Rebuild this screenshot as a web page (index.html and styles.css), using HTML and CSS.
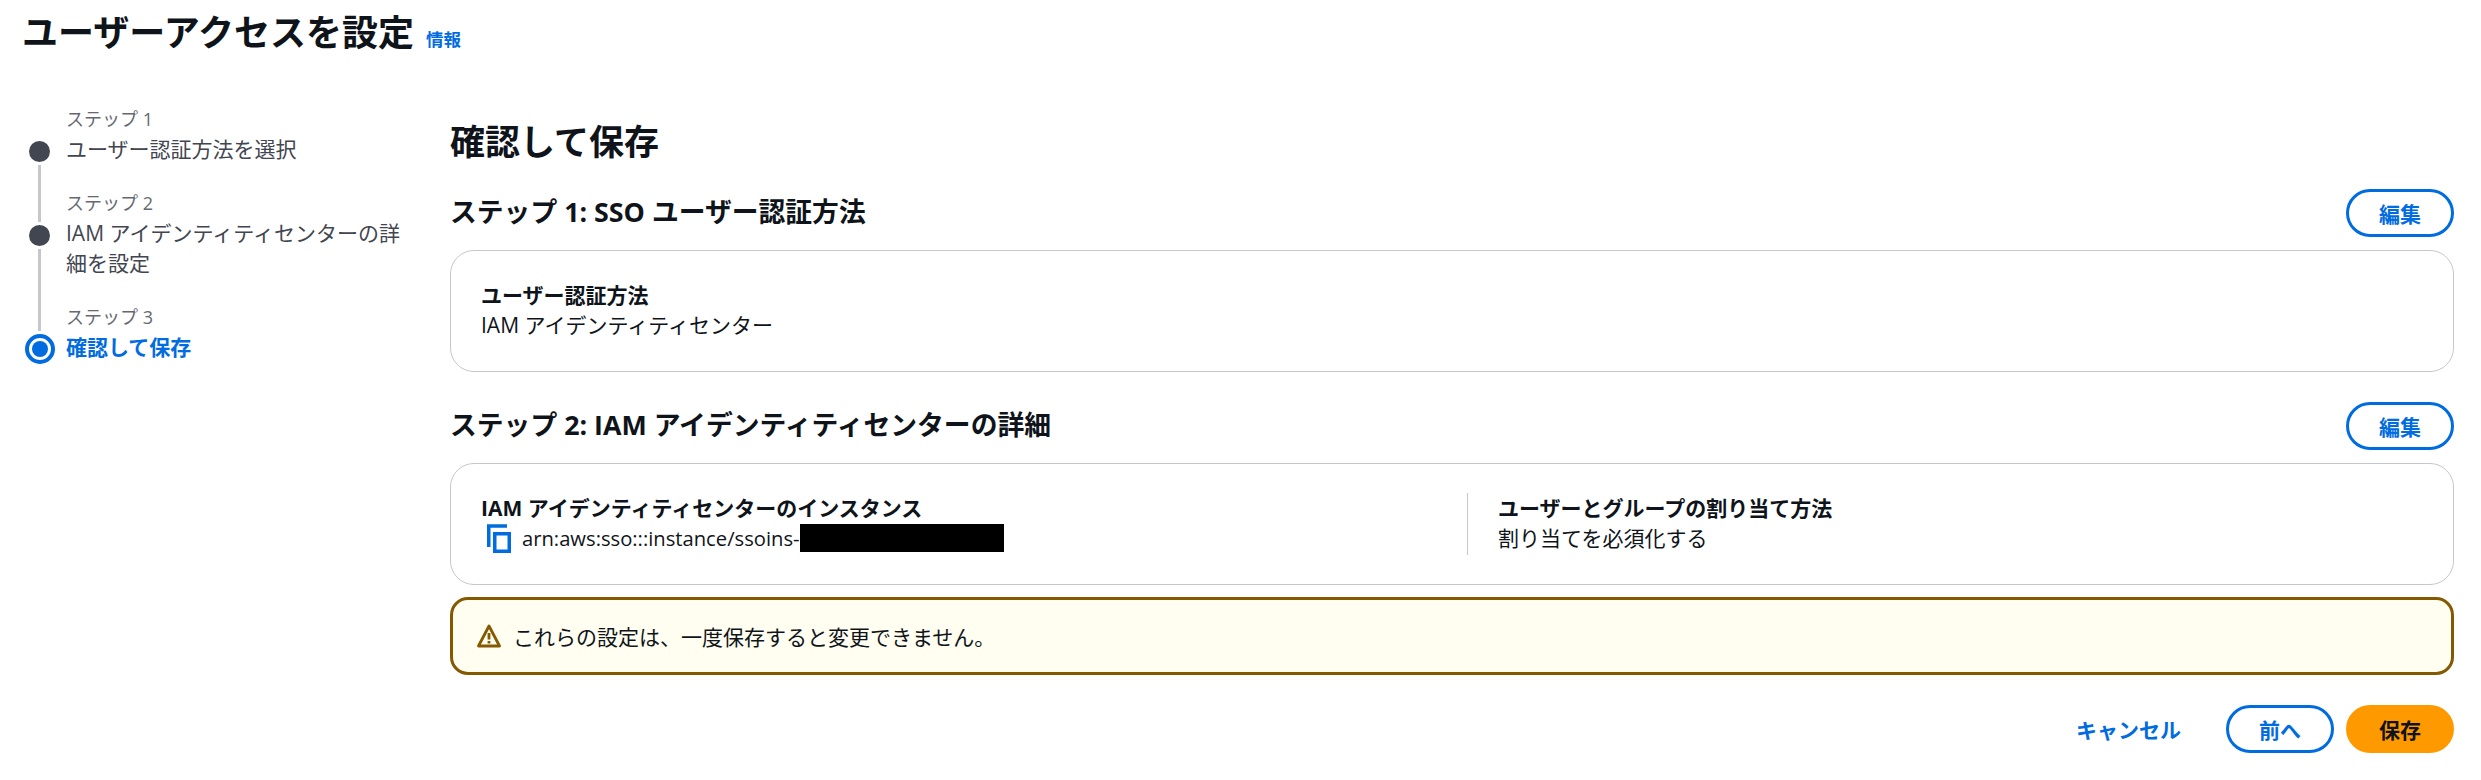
FILE: index.html
```html
<!DOCTYPE html>
<html lang="ja">
<head>
    <meta charset="UTF-8">
    <title>ユーザーアクセスを設定</title>
    <link rel="stylesheet" href="styles.css">
</head>
<body>
    <header class="page-header">
        <h1>ユーザーアクセスを設定</h1>
        <a class="info-link">情報</a>
    </header>
    <div class="layout">
        <nav class="steps">
            <div class="step">
                <div class="marker">
                    <span class="spacer-first"></span>
                    <span class="dot"></span>
                    <span class="line line-bottom"></span>
                </div>
                <div class="step-text">
                    <div class="step-label">ステップ 1</div>
                    <div class="step-title">ユーザー認証方法を選択</div>
                </div>
            </div>
            <div class="step">
                <div class="marker">
                    <span class="line line-top"></span>
                    <span class="dot"></span>
                    <span class="line line-bottom"></span>
                </div>
                <div class="step-text">
                    <div class="step-label">ステップ 2</div>
                    <div class="step-title">IAM アイデンティティセンターの詳細を設定</div>
                </div>
            </div>
            <div class="step step-active">
                <div class="marker">
                    <span class="line line-top-last"></span>
                    <span class="dot-active"></span>
                </div>
                <div class="step-text">
                    <div class="step-label">ステップ 3</div>
                    <div class="step-title">確認して保存</div>
                </div>
            </div>
        </nav>
        <main class="content">
            <h2>確認して保存</h2>
            <div class="section-head">
                <h3>ステップ 1: SSO ユーザー認証方法</h3>
                <button class="btn">編集</button>
            </div>
            <section class="card">
                <div class="field">
                    <div class="field-label">ユーザー認証方法</div>
                    <div class="field-value">IAM アイデンティティセンター</div>
                </div>
            </section>
            <div class="section-head section-head-2">
                <h3>ステップ 2: IAM アイデンティティセンターの詳細</h3>
                <button class="btn">編集</button>
            </div>
            <section class="card card-columns">
                <div class="field">
                    <div class="field-label">IAM アイデンティティセンターのインスタンス</div>
                    <div class="field-value arn">
                        <svg class="copy-icon" width="24" height="29" viewBox="0 0 24 29" fill="none" stroke="#006ce0" stroke-width="3.500">
                            <path d="M1.750 23V2H20"/>
                            <rect x="7.750" y="9.750" width="14.500" height="17.500"/>
                        </svg>
                        <span class="arn-text">arn:aws:sso:::instance/ssoins-</span><span class="redacted"></span>
                    </div>
                </div>
                <div class="field field-right">
                    <div class="field-label">ユーザーとグループの割り当て方法</div>
                    <div class="field-value">割り当てを必須化する</div>
                </div>
            </section>
            <div class="alert">
                <svg width="24" height="24" viewBox="0 0 24 24" fill="none" stroke="#855900" stroke-width="2.800" stroke-linejoin="round">
                    <path d="M12 2 L22.500 22 H1.500 Z"/>
                    <path d="M12 9 V15.500 M12 17 V19.500"/>
                </svg>
                <span>これらの設定は、一度保存すると変更できません。</span>
            </div>
            <div class="actions">
                <a class="btn-link">キャンセル</a>
                <button class="btn">前へ</button>
                <button class="btn btn-primary">保存</button>
            </div>
        </main>
    </div>
</body>
</html>
```

FILE: styles.css
```css
* {
    box-sizing: border-box;
}

body {
    font-family: "Open Sans", "Noto Sans CJK JP", sans-serif;
    margin: 0;
    padding: 0;
    background-color: white;
    color: #0f141a;
    font-size: 21px;
}

h1, h2, h3 {
    margin: 0;
    font-weight: 700;
}

.page-header {
    display: flex;
    align-items: baseline;
    gap: 12px;
    padding: 8px 0 0 22px;
    height: 104px;
}

.page-header h1 {
    font-size: 36px;
    line-height: 50px;
}

.info-link {
    color: #006ce0;
    font-size: 17.500px;
    font-weight: 700;
}

.layout {
    display: flex;
}

.steps {
    width: 450px;
    flex-shrink: 0;
    padding-left: 24px;
    padding-right: 44px;
}

.step {
    display: flex;
}

.marker {
    width: 31px;
    margin-right: 11px;
    flex-shrink: 0;
    display: flex;
    flex-direction: column;
    align-items: center;
}

.spacer-first {
    height: 37px;
}

.dot {
    width: 21px;
    height: 21px;
    border-radius: 50%;
    background-color: #424650;
    flex-shrink: 0;
}

.line {
    width: 3px;
    background-color: #c6c6cd;
}

.line-top {
    height: 34px;
    margin-bottom: 3px;
}

.line-top-last {
    height: 29px;
    margin-bottom: 3px;
}

.line-bottom {
    flex: 1;
    margin-top: 3px;
}

.dot-active {
    width: 30px;
    height: 30px;
    border-radius: 50%;
    border: 4px solid #006ce0;
    padding: 3px;
    background-color: #006ce0;
    background-clip: content-box;
    flex-shrink: 0;
}

.step-text {
    padding-bottom: 24px;
}

.step-label {
    font-size: 18px;
    line-height: 30px;
    color: #656871;
}

.step-title {
    font-size: 21px;
    line-height: 30px;
    color: #424650;
}

.step-active .step-title {
    color: #006ce0;
    font-weight: 700;
}

.content {
    flex: 1;
    padding-right: 27px;
}

.content h2 {
    font-size: 35px;
    line-height: 46px;
    margin-top: 15px;
}

.section-head {
    display: flex;
    justify-content: space-between;
    align-items: center;
    margin-top: 24px;
    height: 48px;
}

.section-head-2 {
    margin-top: 30px;
}

.section-head h3 {
    font-size: 26.800px;
    padding-bottom: 6px;
}

.btn {
    font-family: inherit;
    font-size: 21px;
    font-weight: 700;
    color: #006ce0;
    background-color: white;
    border: 3px solid #006ce0;
    border-radius: 30px;
    width: 108px;
    height: 48px;
    padding: 0;
}

.btn-primary {
    color: #0f141a;
    background-color: #ff9900;
    border-color: #ff9900;
}

.btn-link {
    color: #006ce0;
    font-size: 21px;
    font-weight: 700;
    margin-right: 33px;
}

.card {
    margin-top: 13px;
    border: 1.500px solid #c6c6cd;
    border-radius: 24px;
    height: 122px;
    padding: 29px 30px;
}

.card-columns {
    display: grid;
    grid-template-columns: 1fr 1fr;
    gap: 30px;
}

.field-label {
    font-weight: 700;
    line-height: 30px;
}

.field-value {
    line-height: 30px;
}

.field-right {
    border-left: 1.500px solid #c6c6cd;
    padding-left: 30px;
}

.arn {
    display: flex;
    align-items: center;
    padding-left: 6px;
}

.arn-text {
    font-size: 20.200px;
}

.copy-icon {
    margin-right: 11px;
}

.redacted {
    width: 204px;
    height: 28px;
    background-color: black;
}

.alert {
    display: flex;
    align-items: center;
    gap: 12px;
    margin-top: 12px;
    height: 78px;
    padding-left: 24px;
    background-color: #fffef0;
    border: 3px solid #855900;
    border-radius: 18px;
}

.actions {
    display: flex;
    justify-content: flex-end;
    align-items: center;
    gap: 12px;
    margin-top: 30px;
}
```
